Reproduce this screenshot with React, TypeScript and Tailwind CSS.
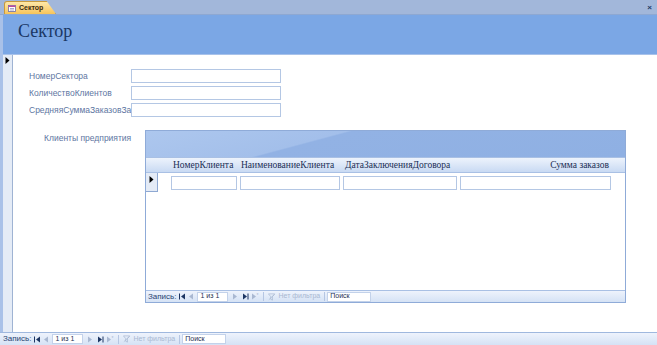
import React from "react";

const sans = "font-['Liberation_Sans',Arial,sans-serif]";
const serif = "font-['Liberation_Serif','DejaVu_Serif',serif]";

function Arrow({ dir, bar, star, active }: { dir: "l" | "r"; bar?: boolean; star?: boolean; active?: boolean }) {
  const c = active ? "#1c3563" : "#a9b8d2";
  return (
    <svg width="9" height="7" viewBox="0 0 9 7" className="shrink-0">
      {dir === "l" ? (
        <>
          {bar && <rect x="1" y="0.5" width="1" height="6" fill={c} />}
          <polygon points={bar ? "7,0.5 3,3.5 7,6.5" : "6,0.5 2,3.5 6,6.5"} fill={c} />
        </>
      ) : (
        <>
          <polygon points="2,0.5 6,3.5 2,6.5" fill={c} />
          {bar && <rect x="6.5" y="0.5" width="1" height="6" fill={c} />}
          {star && <text x="6.5" y="4" fontSize="5" fill={c}>*</text>}
        </>
      )}
    </svg>
  );
}

function NavBar({ gapLeft = "ml-[3px]" }: { gapLeft?: string }) {
  return (
    <div className={`flex h-full items-center ${sans} text-[7px] text-[#2a4372]`}>
      <span className={`${gapLeft} mr-[2px] text-[8px]`}>Запись:</span>
      <Arrow dir="l" bar active />
      <Arrow dir="l" />
      <div className="ml-[1px] flex h-[10px] w-[31px] items-center border border-[#c3d2ea] bg-white px-[2px] text-[#1c2f52]">
        1 из 1
      </div>
      <span className="ml-[3px]">
        <Arrow dir="r" />
      </span>
      <span className="ml-[1px]">
        <Arrow dir="r" bar active />
      </span>
      <Arrow dir="r" star />
      <div className="ml-[4px] h-[9px] w-px bg-[#b5c6e3]" />
      <svg width="8" height="8" viewBox="0 0 9 8" className="ml-[4px] shrink-0">
        <polygon points="0.5,0.5 7.5,0.5 5,3.5 5,7.5 3,6.5 3,3.5" fill="none" stroke="#a9b8d2" strokeWidth="0.8" />
        <line x1="1" y1="7" x2="7.5" y2="1" stroke="#a9b8d2" strokeWidth="0.8" />
      </svg>
      <span className="ml-[2px] text-[#a9b8d2]">Нет фильтра</span>
      <div className="ml-[4px] h-[9px] w-px bg-[#b5c6e3]" />
      <div className="ml-[2px] flex h-[10px] w-[44px] items-center border border-[#c3d2ea] bg-white px-[2px] text-[#1c2f52]">
        Поиск
      </div>
    </div>
  );
}

function Field({ label }: { label: string }) {
  return (
    <div className="flex items-center">
      <div className={`w-[102px] overflow-hidden whitespace-nowrap ${sans} text-[8.5px] text-[#5e76a2]`}>{label}</div>
      <div className="h-[14px] w-[150px] border border-[#b4c7e4] bg-white" />
    </div>
  );
}

export default function App() {
  return (
    <div className="flex h-[345px] w-[657px] flex-col overflow-hidden bg-white">
      {/* document tab strip */}
      <div className="flex h-[15px] shrink-0 items-end border-b border-[#8ea8d2] bg-[#a2b7da] pl-[4px]">
        <div className="flex h-[13px] w-[52px] items-center gap-[3px] rounded-tl-[3px] border border-b-0 border-[#c89a3e] bg-gradient-to-b from-[#fde8a8] to-[#f7c459] pl-[3px] [clip-path:polygon(0_0,82%_0,100%_100%,0_100%)]">
          <svg width="8" height="7" viewBox="0 0 8 7" className="shrink-0">
            <rect x="0.5" y="0.5" width="7" height="6" fill="#fff" stroke="#6a6aa8" strokeWidth="0.8" />
            <rect x="0.5" y="0.5" width="7" height="1.5" fill="#c04a9a" />
            <line x1="2" y1="3.5" x2="6" y2="3.5" stroke="#6a6aa8" strokeWidth="0.6" />
            <line x1="2" y1="5" x2="6" y2="5" stroke="#6a6aa8" strokeWidth="0.6" />
          </svg>
          <span className={`${sans} text-[7px] font-bold text-[#3a2a10]`}>Сектор</span>
        </div>
        <div className="flex-1" />
        <span className={`mr-[5px] mb-[2px] ${sans} text-[8px] font-bold leading-none text-[#233a66]`}>×</span>
      </div>

      <div className="flex min-h-0 flex-1">
        <div className="w-[3px] shrink-0 bg-[#a9c1e8]" />
        <div className="flex min-w-0 flex-1 flex-col">
          {/* form header */}
          <div className="flex h-[40px] shrink-0 items-start border-b border-[#a8c2ea] bg-[#7ba7e5] pl-[15px] pt-[4px]">
            <span className={`${serif} text-[18px] leading-[24px] text-[#1a3764]`}>Сектор</span>
          </div>

          <div className="flex min-h-0 flex-1">
            {/* record selector */}
            <div className="flex w-[10px] shrink-0 justify-center border-r border-[#9fb3d3] bg-[#e4ebf6] pt-[2px]">
              <svg width="5" height="7" viewBox="0 0 5 7">
                <polygon points="0.5,0 4.5,3.5 0.5,7" fill="#000" />
              </svg>
            </div>

            {/* detail */}
            <div className="flex flex-1 flex-col pl-[16px] pt-[14px]">
              <div className="flex flex-col gap-[3px]">
                <Field label="НомерСектора" />
                <Field label="КоличествоКлиентов" />
                <Field label="СредняяСуммаЗаказовЗа" />
              </div>

              <div className="mt-[13px] flex">
                <div className={`w-[116px] shrink-0 pl-[15px] pt-[2px] ${sans} text-[8.5px] text-[#5e76a2]`}>
                  Клиенты предприятия
                </div>
                <div className="flex h-[173px] w-[481px] flex-col border border-[#8fabd8] bg-white">
                  <div className="h-[26px] shrink-0 bg-[linear-gradient(165deg,#adc7ee_0%,#a3bfea_35%,#92b2e4_36%,#8fb0e3_100%)]" />
                  <div className={`flex h-[16px] shrink-0 items-center border-y border-[#a9c0e4] bg-gradient-to-b from-[#edf3fc] to-[#c9daf3] pl-[27px] pr-[16px] ${serif} text-[9.5px] text-[#1b2f55]`}>
                    <span className="w-[68px]">НомерКлиента</span>
                    <span className="w-[104px]">НаименованиеКлиента</span>
                    <span className="w-[110px]">ДатаЗаключенияДоговора</span>
                    <span className="flex-1 text-right">Сумма заказов</span>
                  </div>
                  <div className="flex h-[19px] shrink-0 items-center">
                    <div className="flex h-full w-[12px] items-start justify-center border-r border-b border-[#8ea8d2] bg-[#e4ebf6] pt-[3px]">
                      <svg width="5" height="7" viewBox="0 0 5 7">
                        <polygon points="0.5,0 4.5,3.5 0.5,7" fill="#000" />
                      </svg>
                    </div>
                    <div className="ml-[13px] flex gap-[3px]">
                      <div className="h-[14px] w-[66px] border border-[#b4c7e4]" />
                      <div className="h-[14px] w-[100px] border border-[#b4c7e4]" />
                      <div className="h-[14px] w-[114px] border border-[#b4c7e4]" />
                      <div className="h-[14px] w-[151px] border border-[#b4c7e4]" />
                    </div>
                  </div>
                  <div className="flex-1" />
                  <div className="h-[12px] shrink-0 border-t border-[#a9c0e4] bg-gradient-to-b from-[#eef3fc] to-[#d5e2f5]">
                    <NavBar gapLeft="ml-[2px]" />
                  </div>
                </div>
              </div>
            </div>
          </div>
        </div>
      </div>

      {/* main navigation */}
      <div className="h-[13px] shrink-0 border-t border-[#9fb8de] bg-gradient-to-b from-[#eef3fc] to-[#d5e2f5]">
        <NavBar />
      </div>
    </div>
  );
}
